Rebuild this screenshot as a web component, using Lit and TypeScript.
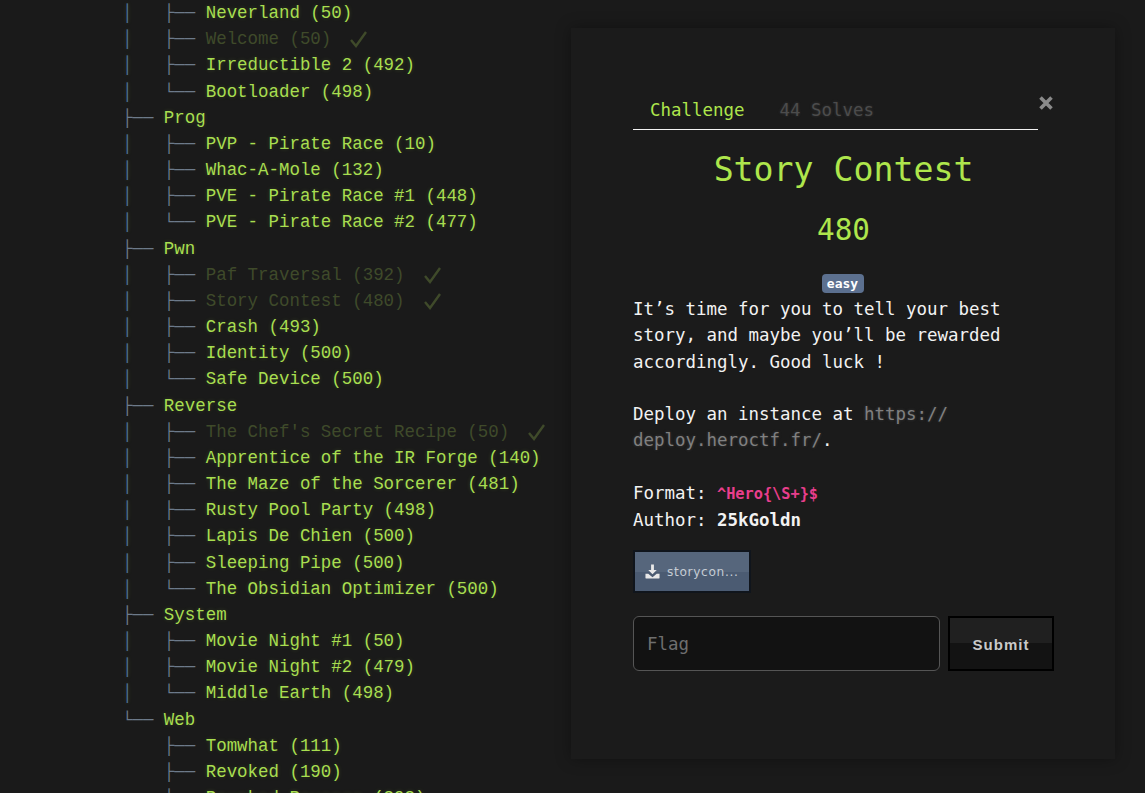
import { LitElement, html, css } from "lit";
import { customElement } from "lit/decorators.js";

type Row = { p: string; t: string; solved?: boolean; cat?: boolean };

const B = "│   ";
const rows: Row[] = [
  { p: "├── ", t: "Neverland (50)" },
  { p: "├── ", t: "Welcome (50)", solved: true },
  { p: "├── ", t: "Irreductible 2 (492)" },
  { p: "└── ", t: "Bootloader (498)" },
  { p: "", t: "Prog", cat: true },
  { p: "├── ", t: "PVP - Pirate Race (10)" },
  { p: "├── ", t: "Whac-A-Mole (132)" },
  { p: "├── ", t: "PVE - Pirate Race #1 (448)" },
  { p: "└── ", t: "PVE - Pirate Race #2 (477)" },
  { p: "", t: "Pwn", cat: true },
  { p: "├── ", t: "Paf Traversal (392)", solved: true },
  { p: "├── ", t: "Story Contest (480)", solved: true },
  { p: "├── ", t: "Crash (493)" },
  { p: "├── ", t: "Identity (500)" },
  { p: "└── ", t: "Safe Device (500)" },
  { p: "", t: "Reverse", cat: true },
  { p: "├── ", t: "The Chef's Secret Recipe (50)", solved: true },
  { p: "├── ", t: "Apprentice of the IR Forge (140)" },
  { p: "├── ", t: "The Maze of the Sorcerer (481)" },
  { p: "├── ", t: "Rusty Pool Party (498)" },
  { p: "├── ", t: "Lapis De Chien (500)" },
  { p: "├── ", t: "Sleeping Pipe (500)" },
  { p: "└── ", t: "The Obsidian Optimizer (500)" },
  { p: "", t: "System", cat: true },
  { p: "├── ", t: "Movie Night #1 (50)" },
  { p: "├── ", t: "Movie Night #2 (479)" },
  { p: "└── ", t: "Middle Earth (498)" },
  { p: "", t: "Web", cat: true },
  { p: "├── ", t: "Tomwhat (111)" },
  { p: "├── ", t: "Revoked (190)" },
  { p: "├── ", t: "Revoked Revenge (393)" },
];

@customElement("app-root")
export class AppRoot extends LitElement {
  static styles = css`
    :host {
      display: block;
      height: 793px;
      overflow: hidden;
      position: relative;
      background: #1a1a1a;
      font-family: "Liberation Mono", monospace;
    }
    .tree {
      margin: 0;
      padding-left: 122px;
      font-size: 17.44px;
      line-height: 26.18px;
      white-space: pre;
      color: #a8de50;
      text-shadow: 0 0 4px rgba(168, 222, 80, 0.2);
    }
    .row {
      display: flex;
      height: 26.18px;
    }
    .pipe { color: #4f7398; }
    .branch { color: #6c7a8a; text-shadow: none; }
    .solved .name { color: #3f4a2a; text-shadow: none; }
    .check {
      width: 18px;
      height: 18px;
      margin-left: 18px;
      margin-top: 4px;
      fill: none;
      stroke: #3f4a2a;
      stroke-width: 2.4;
    }
    .modal {
      position: absolute;
      left: 571px;
      top: 28px;
      width: 544px;
      height: 731px;
      box-sizing: border-box;
      padding: 66px 61px 0 62px;
      background: #1b1b1b;
      box-shadow: 0 0 14px rgba(0, 0, 0, 0.35);
      font-family: "DejaVu Sans Mono", monospace;
      font-size: 17.44px;
      line-height: 26.3px;
      color: #f2f2f2;
    }
    .close {
      position: absolute;
      left: 467px;
      top: 67px;
      width: 16px;
      height: 16px;
      stroke: #8a8a8a;
      stroke-width: 3.6;
    }
    .tabs {
      display: flex;
      gap: 35px;
      padding: 3px 0 6px 17px;
      border-bottom: 1px solid #f2f2f2;
      width: 388px;
      height: 26px;
    }
    .tab-on { color: #aee64c; }
    .tab-off {
      color: #4c4c4c;
      text-shadow: 0 0 3px rgba(120, 120, 120, 0.3);
    }
    .title {
      margin: 20px 0 0;
      width: 421px;
      text-align: center;
      font-size: 33.2px;
      font-weight: 400;
      line-height: 40px;
      color: #aee64c;
    }
    .value {
      width: 421px;
      text-align: center;
      font-size: 29.3px;
      line-height: 36px;
      margin-top: 22px;
      color: #aee64c;
    }
    .tagwrap {
      width: 419px;
      display: flex;
      justify-content: center;
      margin-top: 26px;
      height: 19px;
    }
    .tag {
      background: #5c708f;
      color: #fff;
      border-radius: 4px;
      font-size: 13px;
      font-weight: 700;
      line-height: 19px;
      height: 19px;
      box-sizing: border-box;
      width: 42px;
      text-align: center;
    }
    p { margin: 0; }
    .desc { width: 405px; margin-top: 3px; }
    .mt { margin-top: 26.3px; }
    .link {
      color: #808080;
      text-shadow: 0 0 3px rgba(130, 130, 130, 0.35);
    }
    .fmt {
      color: #e83e8c;
      font-weight: 700;
      font-size: 15.26px;
    }
    .btn-file {
      display: flex;
      align-items: center;
      gap: 7px;
      box-sizing: border-box;
      width: 118px;
      height: 43px;
      margin-top: 16px;
      padding-left: 10px;
      border: 2px solid #10151c;
      background: linear-gradient(#56667c 0 50%, #4b5b72 50% 100%);
      color: #c5ccd4;
      font-size: 12.2px;
      letter-spacing: 0.65px;
      font-family: "DejaVu Sans", sans-serif;
      white-space: nowrap;
    }
    .btn-file span { position: relative; top: 1px; }
    .btn-file svg { width: 15px; height: 15px; fill: #e8e8e8; flex: none; }
    .form {
      display: flex;
      gap: 8px;
      margin-top: 23px;
      height: 55px;
    }
    .input {
      box-sizing: border-box;
      width: 307px;
      height: 55px;
      padding-left: 13px;
      border: 1px solid #555;
      border-radius: 6px;
      background: #121212;
      color: #6e6e6e;
      line-height: 54px;
    }
    .submit {
      box-sizing: border-box;
      width: 106px;
      height: 55px;
      border: 2px solid #000;
      background: linear-gradient(#202020 0 50%, #131313 50% 100%);
      color: #c9c9c9;
      font-family: "Liberation Sans", sans-serif;
      font-size: 15px;
      font-weight: 700;
      letter-spacing: 1px;
      text-align: center;
      line-height: 53px;
    }
  `;

  private row(r: Row) {
    const under = r.t === "Tomwhat (111)" || r.t === "Revoked (190)" || r.t === "Revoked Revenge (393)";
    return html`<div class="row ${r.solved ? "solved" : ""}">
      ${r.cat
        ? html`<span class="branch">${r.t === "Web" ? "└── " : "├── "}</span>`
        : html`<span class="pipe">${under ? "    " : B}</span><span class="branch">${r.p}</span>`}
      <span class="name">${r.t}</span>
      ${r.solved
        ? html`<svg class="check" viewBox="0 0 18 18"><path d="M2 10l5 6L17 2"></path></svg>`
        : ""}
    </div>`;
  }

  render() {
    return html`
      <div class="tree">${rows.map((r) => this.row(r))}</div>
      <section class="modal">
        <svg class="close" viewBox="0 0 16 16"><path d="M2.5 2.500l11 11M13.500 2.500l-11 11"></path></svg>
        <div class="tabs"><span class="tab-on">Challenge</span><span class="tab-off">44 Solves</span></div>
        <h1 class="title">Story Contest</h1>
        <div class="value">480</div>
        <div class="tagwrap"><span class="tag">easy</span></div>
        <div class="desc">
          <p>It’s time for you to tell your best story, and maybe you’ll be rewarded accordingly. Good luck !</p>
          <p class="mt">Deploy an instance at <span class="link">https:// deploy.heroctf.fr/</span>.</p>
          <p class="mt">Format: <span class="fmt">^Hero{\\S+}$</span></p>
          <p>Author: <b>25kGoldn</b></p>
        </div>
        <div class="btn-file">
          <svg viewBox="0 0 16 16"><path d="M6.500 0.500h3v6h3L8 11 3.500 6.500h3zM0.500 10.500h3L8 14l4.500-3.500h3V15a0.500 0.500 0 0 1-0.500 0.500H1a0.500 0.500 0 0 1-0.500-0.500z"></path></svg>
          <span>storycon...</span>
        </div>
        <div class="form">
          <div class="input">Flag</div>
          <div class="submit">Submit</div>
        </div>
      </section>
    `;
  }
}
